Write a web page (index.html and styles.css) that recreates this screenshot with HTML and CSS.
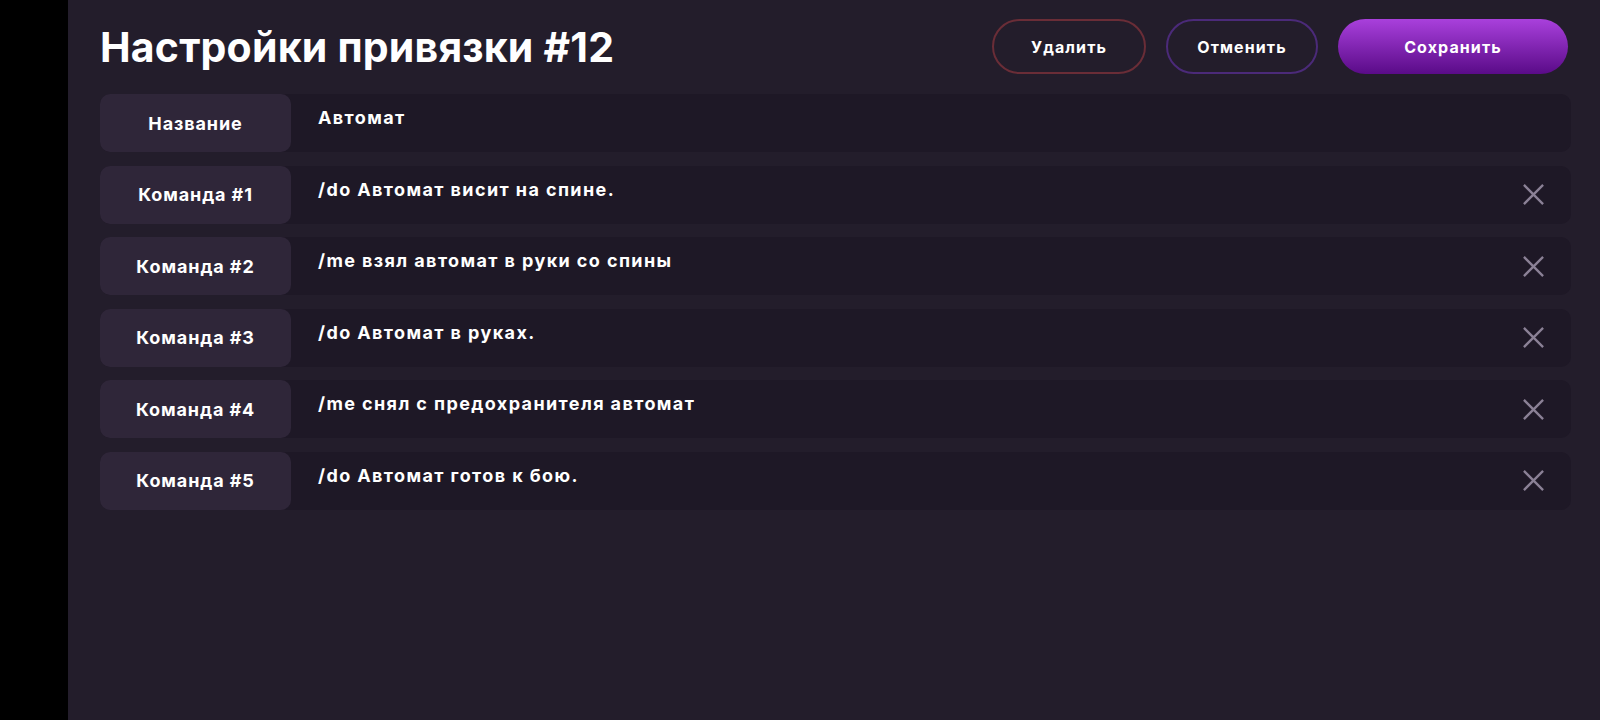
FILE: index.html
```html
<!DOCTYPE html>
<html lang="ru">
<head>
    <meta charset="UTF-8">
    <meta name="viewport" content="width=device-width, initial-scale=1.0">
    <title>Настройки привязки #12</title>
    <link rel="stylesheet" href="styles.css">
</head>
<body>
    <div class="app">
        <aside class="side"></aside>
        <main class="panel">
            <header class="head">
                <h1>Настройки привязки #12</h1>
                <div class="actions">
                    <button class="btn btn-delete">Удалить</button>
                    <button class="btn btn-cancel">Отменить</button>
                    <button class="btn btn-save">Сохранить</button>
                </div>
            </header>

            <div class="fields">
                <div class="field">
                    <div class="field-label">Название</div>
                    <div class="field-value">Автомат</div>
                </div>
                <div class="field">
                    <div class="field-label">Команда #1</div>
                    <div class="field-value">/do Автомат висит на спине.</div>
                    <button class="remove" title="Удалить команду">
                        <svg viewBox="0 0 24 24"><path d="M2 2 L22 22 M22 2 L2 22"/></svg>
                    </button>
                </div>
                <div class="field">
                    <div class="field-label">Команда #2</div>
                    <div class="field-value">/me взял автомат в руки со спины</div>
                    <button class="remove" title="Удалить команду">
                        <svg viewBox="0 0 24 24"><path d="M2 2 L22 22 M22 2 L2 22"/></svg>
                    </button>
                </div>
                <div class="field">
                    <div class="field-label">Команда #3</div>
                    <div class="field-value">/do Автомат в руках.</div>
                    <button class="remove" title="Удалить команду">
                        <svg viewBox="0 0 24 24"><path d="M2 2 L22 22 M22 2 L2 22"/></svg>
                    </button>
                </div>
                <div class="field">
                    <div class="field-label">Команда #4</div>
                    <div class="field-value">/me снял с предохранителя автомат</div>
                    <button class="remove" title="Удалить команду">
                        <svg viewBox="0 0 24 24"><path d="M2 2 L22 22 M22 2 L2 22"/></svg>
                    </button>
                </div>
                <div class="field">
                    <div class="field-label">Команда #5</div>
                    <div class="field-value">/do Автомат готов к бою.</div>
                    <button class="remove" title="Удалить команду">
                        <svg viewBox="0 0 24 24"><path d="M2 2 L22 22 M22 2 L2 22"/></svg>
                    </button>
                </div>
            </div>
        </main>
    </div>
</body>
</html>
```

FILE: styles.css
```css
body {
    margin: 0;
    background-color: #000;
    font-family: Inter, "Noto Sans", sans-serif;
    color: #fff;
}
.app {
    display: flex;
    height: 100vh;
}
.side {
    width: 68px;
    flex-shrink: 0;
    background-color: #000;
}
.panel {
    flex: 1;
    background-color: #231d2b;
    padding: 19px 29px 0 32px;
}
.head {
    display: flex;
    align-items: center;
    justify-content: space-between;
    height: 55px;
    margin-bottom: 20px;
}
.head h1 {
    margin: 0;
    font-size: 41px;
    font-weight: 700;
    letter-spacing: 0.2px;
}
.actions {
    display: flex;
    gap: 20px;
    margin-right: 3px;
}
.btn {
    height: 55px;
    border-radius: 28px;
    font-family: inherit;
    font-size: 16px;
    font-weight: 700;
    letter-spacing: 1.1px;
    color: #fff;
    cursor: pointer;
    background: none;
}
.btn-delete {
    width: 154px;
    border: 2px solid #6a2d37;
}
.btn-cancel {
    width: 152px;
    border: 2px solid #4b2a79;
}
.btn-save {
    width: 230px;
    border: none;
    background: linear-gradient(to bottom, #a940dc, #5a0b88);
}
.fields {
    display: flex;
    flex-direction: column;
    gap: 13.6px;
}
.field {
    display: flex;
    height: 58px;
    background-color: #1e1826;
    border-radius: 10px;
}
.field-label {
    width: 191px;
    flex-shrink: 0;
    display: flex;
    align-items: center;
    justify-content: center;
    background-color: #2f2639;
    border-radius: 10px;
    font-size: 18px;
    font-weight: 700;
    letter-spacing: 0.9px;
}
.field-value {
    flex: 1;
    padding: 13px 0 0 27px;
    font-size: 18px;
    font-weight: 700;
    letter-spacing: 1.4px;
}
.remove {
    align-self: center;
    width: 23px;
    height: 23px;
    padding: 0;
    margin-right: 26px;
    border: none;
    background: none;
    cursor: pointer;
}
.remove svg {
    display: block;
    width: 23px;
    height: 23px;
    stroke: #8b8196;
    stroke-width: 2.4;
    fill: none;
}
```
